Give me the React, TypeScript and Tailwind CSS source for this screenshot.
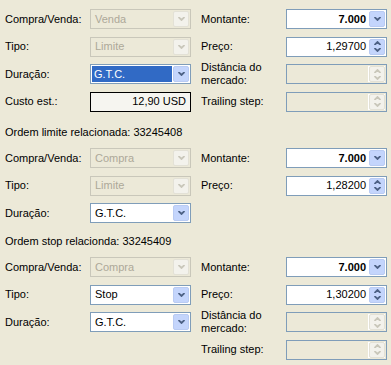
import React from 'react';

type Row = {
  label: string;
  kind: 'combo' | 'spin' | 'drop' | 'readonly';
  value?: string;
  disabled?: boolean;
  selected?: boolean;
  bold?: boolean;
};

function Chevron({ up, color }: { up?: boolean; color: string }) {
  return (
    <svg width="7" height="4" viewBox="0 0 7 4" className="block">
      <path
        d={up ? 'M0.5 4 L3.5 1 L6.5 4' : 'M0.5 0 L3.5 3 L6.5 0'}
        fill="none"
        stroke={color}
        strokeWidth="1.8"
      />
    </svg>
  );
}

function ArrowButton({ disabled, spin }: { disabled?: boolean; spin?: boolean }) {
  const color = disabled ? '#C9C7BA' : '#4D6185';
  return (
    <div
      className={`flex w-[16px] shrink-0 flex-col items-center justify-center gap-[3px] rounded-[2px] border ${
        disabled ? 'border-[#E3E1D6] bg-[#F3F2EC]' : 'border-[#B9CBF3] bg-[#C4D5FC]'
      }`}
    >
      {spin ? (
        <>
          <Chevron up color={color} />
          <Chevron color={color} />
        </>
      ) : (
        <Chevron color={color} />
      )}
    </div>
  );
}

function Field({ row }: { row: Row }) {
  if (row.kind === 'readonly') {
    return (
      <div className="flex h-[20px] w-[101px] items-center justify-end border border-black bg-[#F6F5F0] pr-[4px] text-black">
        {row.value}
      </div>
    );
  }
  const boxCls =
    row.kind === 'combo' && row.disabled
      ? 'border-[#C9C7BA] bg-[#ECE9D8]'
      : row.disabled
      ? 'border-[#7F9DB9] bg-[#ECE9D8]'
      : 'border-[#7F9DB9] bg-white';
  const isCombo = row.kind === 'combo';
  return (
    <div className={`flex h-[20px] w-[101px] border p-px ${boxCls}`}>
      <div
        className={`flex min-w-0 flex-1 items-center ${isCombo ? 'justify-start' : 'justify-end pr-[3px]'} ${
          row.disabled ? 'text-[#ACA899]' : 'text-black'
        } ${row.bold ? 'font-bold' : ''}`}
      >
        {row.selected ? (
          <span className="mr-px flex h-full w-full items-center bg-[#316AC5] pl-[2px] text-white">{row.value}</span>
        ) : (
          <span className={isCombo ? 'pl-[3px]' : ''}>{row.value}</span>
        )}
      </div>
      <div className={`flex ${row.disabled && !isCombo ? 'bg-white pl-px' : ''}`}>
        <ArrowButton disabled={row.disabled} spin={row.kind === 'spin'} />
      </div>
    </div>
  );
}

function Column({ rows }: { rows: Row[] }) {
  return (
    <div className="flex flex-col gap-[7.5px]">
      {rows.map((r, i) => (
        <div key={i} className="flex h-[20px] items-center">
          <div className="flex w-[85px] items-center leading-[13px]">{r.label}</div>
          <Field row={r} />
        </div>
      ))}
    </div>
  );
}

function Section({ left, right }: { left: Row[]; right: Row[] }) {
  return (
    <div className="flex gap-[10px]">
      <Column rows={left} />
      <Column rows={right} />
    </div>
  );
}

const S1_LEFT: Row[] = [
  { label: 'Compra/Venda:', kind: 'combo', value: 'Venda', disabled: true },
  { label: 'Tipo:', kind: 'combo', value: 'Limite', disabled: true },
  { label: 'Duração:', kind: 'combo', value: 'G.T.C.', selected: true },
  { label: 'Custo est.:', kind: 'readonly', value: '12,90 USD' },
];

const S1_RIGHT: Row[] = [
  { label: 'Montante:', kind: 'drop', value: '7.000', bold: true },
  { label: 'Preço:', kind: 'spin', value: '1,29700' },
  { label: 'Distância do mercado:', kind: 'spin', disabled: true },
  { label: 'Trailing step:', kind: 'spin', disabled: true },
];

const S2_LEFT: Row[] = [
  { label: 'Compra/Venda:', kind: 'combo', value: 'Compra', disabled: true },
  { label: 'Tipo:', kind: 'combo', value: 'Limite', disabled: true },
  { label: 'Duração:', kind: 'combo', value: 'G.T.C.' },
];

const S2_RIGHT: Row[] = [
  { label: 'Montante:', kind: 'drop', value: '7.000', bold: true },
  { label: 'Preço:', kind: 'spin', value: '1,28200' },
];

const S3_LEFT: Row[] = [
  { label: 'Compra/Venda:', kind: 'combo', value: 'Compra', disabled: true },
  { label: 'Tipo:', kind: 'combo', value: 'Stop' },
  { label: 'Duração:', kind: 'combo', value: 'G.T.C.' },
];

const S3_RIGHT: Row[] = [
  { label: 'Montante:', kind: 'drop', value: '7.000', bold: true },
  { label: 'Preço:', kind: 'spin', value: '1,30200' },
  { label: 'Distância do mercado:', kind: 'spin', disabled: true },
  { label: 'Trailing step:', kind: 'spin', disabled: true },
];

export default function App() {
  return (
    <div className="h-[365px] w-[391px] overflow-hidden bg-[#ECE9D8] pl-[5px] pt-[9px] font-['Liberation_Sans',Arial,sans-serif] text-[11px] leading-[13px] text-black">
      <Section left={S1_LEFT} right={S1_RIGHT} />
      <div className="mb-[6px] mt-[10.5px] flex h-[20px] items-center">Ordem limite relacionada: 33245408</div>
      <Section left={S2_LEFT} right={S2_RIGHT} />
      <div className="mb-[6px] mt-[8px] flex h-[20px] items-center">Ordem stop relacionda: 33245409</div>
      <Section left={S3_LEFT} right={S3_RIGHT} />
    </div>
  );
}
